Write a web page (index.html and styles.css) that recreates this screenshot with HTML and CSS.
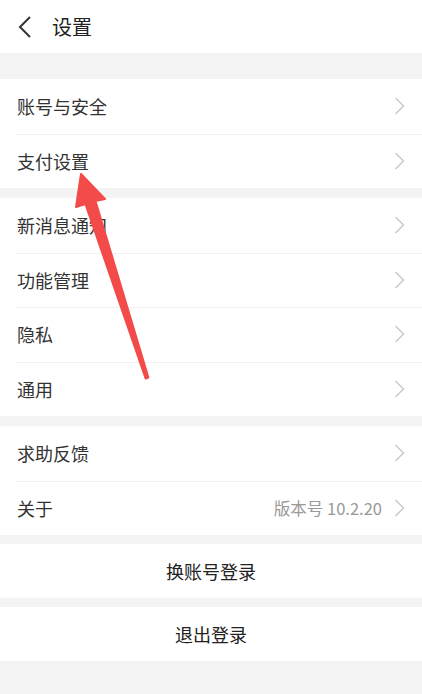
FILE: index.html
```html
<!DOCTYPE html>
<html lang="zh">
<head>
  <meta charset="UTF-8">
  <meta name="viewport" content="width=device-width, initial-scale=1.0">
  <title>设置</title>
  <link rel="stylesheet" href="styles.css">
</head>
<body>
  <header class="topbar">
    <svg class="back" width="14" height="22" viewBox="0 0 14 22"><path d="M12 1 L2 11 L12 21" fill="none" stroke="#333" stroke-width="2"/></svg>
    <h1>设置</h1>
  </header>

  <div class="group first">
    <div class="row"><span>账号与安全</span><svg class="chev" viewBox="0 0 11 18"><path d="M1.5 1 L9.5 9 L1.5 17"/></svg></div>
    <div class="row"><span>支付设置</span><svg class="chev" viewBox="0 0 11 18"><path d="M1.5 1 L9.5 9 L1.5 17"/></svg></div>
  </div>

  <div class="group">
    <div class="row"><span>新消息通知</span><svg class="chev" viewBox="0 0 11 18"><path d="M1.5 1 L9.5 9 L1.5 17"/></svg></div>
    <div class="row"><span>功能管理</span><svg class="chev" viewBox="0 0 11 18"><path d="M1.5 1 L9.5 9 L1.5 17"/></svg></div>
    <div class="row"><span>隐私</span><svg class="chev" viewBox="0 0 11 18"><path d="M1.5 1 L9.5 9 L1.5 17"/></svg></div>
    <div class="row"><span>通用</span><svg class="chev" viewBox="0 0 11 18"><path d="M1.5 1 L9.5 9 L1.5 17"/></svg></div>
  </div>

  <div class="group">
    <div class="row"><span>求助反馈</span><svg class="chev" viewBox="0 0 11 18"><path d="M1.5 1 L9.5 9 L1.5 17"/></svg></div>
    <div class="row"><span>关于</span><em class="note">版本号 10.2.20</em><svg class="chev" viewBox="0 0 11 18"><path d="M1.5 1 L9.5 9 L1.5 17"/></svg></div>
  </div>

  <div class="btn">换账号登录</div>
  <div class="btn">退出登录</div>

  <!-- annotation arrow -->
  <svg class="mark" width="422" height="694" viewBox="0 0 422 694">
    <polygon points="81,174 105,199 95.5,201 148.4,377.5 145.6,378.5 85.4,204 76,207" fill="#f34a4a" stroke="#f34a4a" stroke-width="2" stroke-linejoin="round"/>
  </svg>
</body>
</html>
```

FILE: styles.css
```css
* {
  margin: 0;
  padding: 0;
  box-sizing: border-box;
}

body {
  font-family: "Noto Sans CJK SC", "Noto Sans", sans-serif;
  background-color: #f4f4f4;
  color: #333;
  width: 422px;
  height: 694px;
  position: relative;
  overflow: hidden;
}

.topbar {
  height: 53px;
  background-color: #fff;
  display: flex;
  align-items: center;
  padding-left: 18px;
}

.topbar h1 {
  font-size: 20px;
  font-weight: normal;
  margin-left: 20px;
  color: #222;
}

.group {
  background-color: #fff;
  margin-top: 10px;
}

.group.first {
  margin-top: 26px;
}

.row {
  height: 54.5px;
  display: flex;
  align-items: center;
  padding: 0 17px 0 17px;
  font-size: 18px;
  position: relative;
}

.row + .row::before {
  content: "";
  position: absolute;
  top: 0;
  left: 16px;
  right: 0;
  border-top: 1px solid #f0f0f0;
}

.row span {
  flex: 1;
}

.note {
  font-style: normal;
  font-size: 16.5px;
  color: #999;
  margin-right: 12px;
}

.chev {
  width: 11px;
  height: 18px;
  fill: none;
  stroke: #c8c8c8;
  stroke-width: 1.4;
}

.btn {
  background-color: #fff;
  margin-top: 9px;
  height: 54px;
  display: flex;
  align-items: center;
  justify-content: center;
  font-size: 18px;
  color: #222;
}

.mark {
  position: absolute;
  top: 0;
  left: 0;
}
```
